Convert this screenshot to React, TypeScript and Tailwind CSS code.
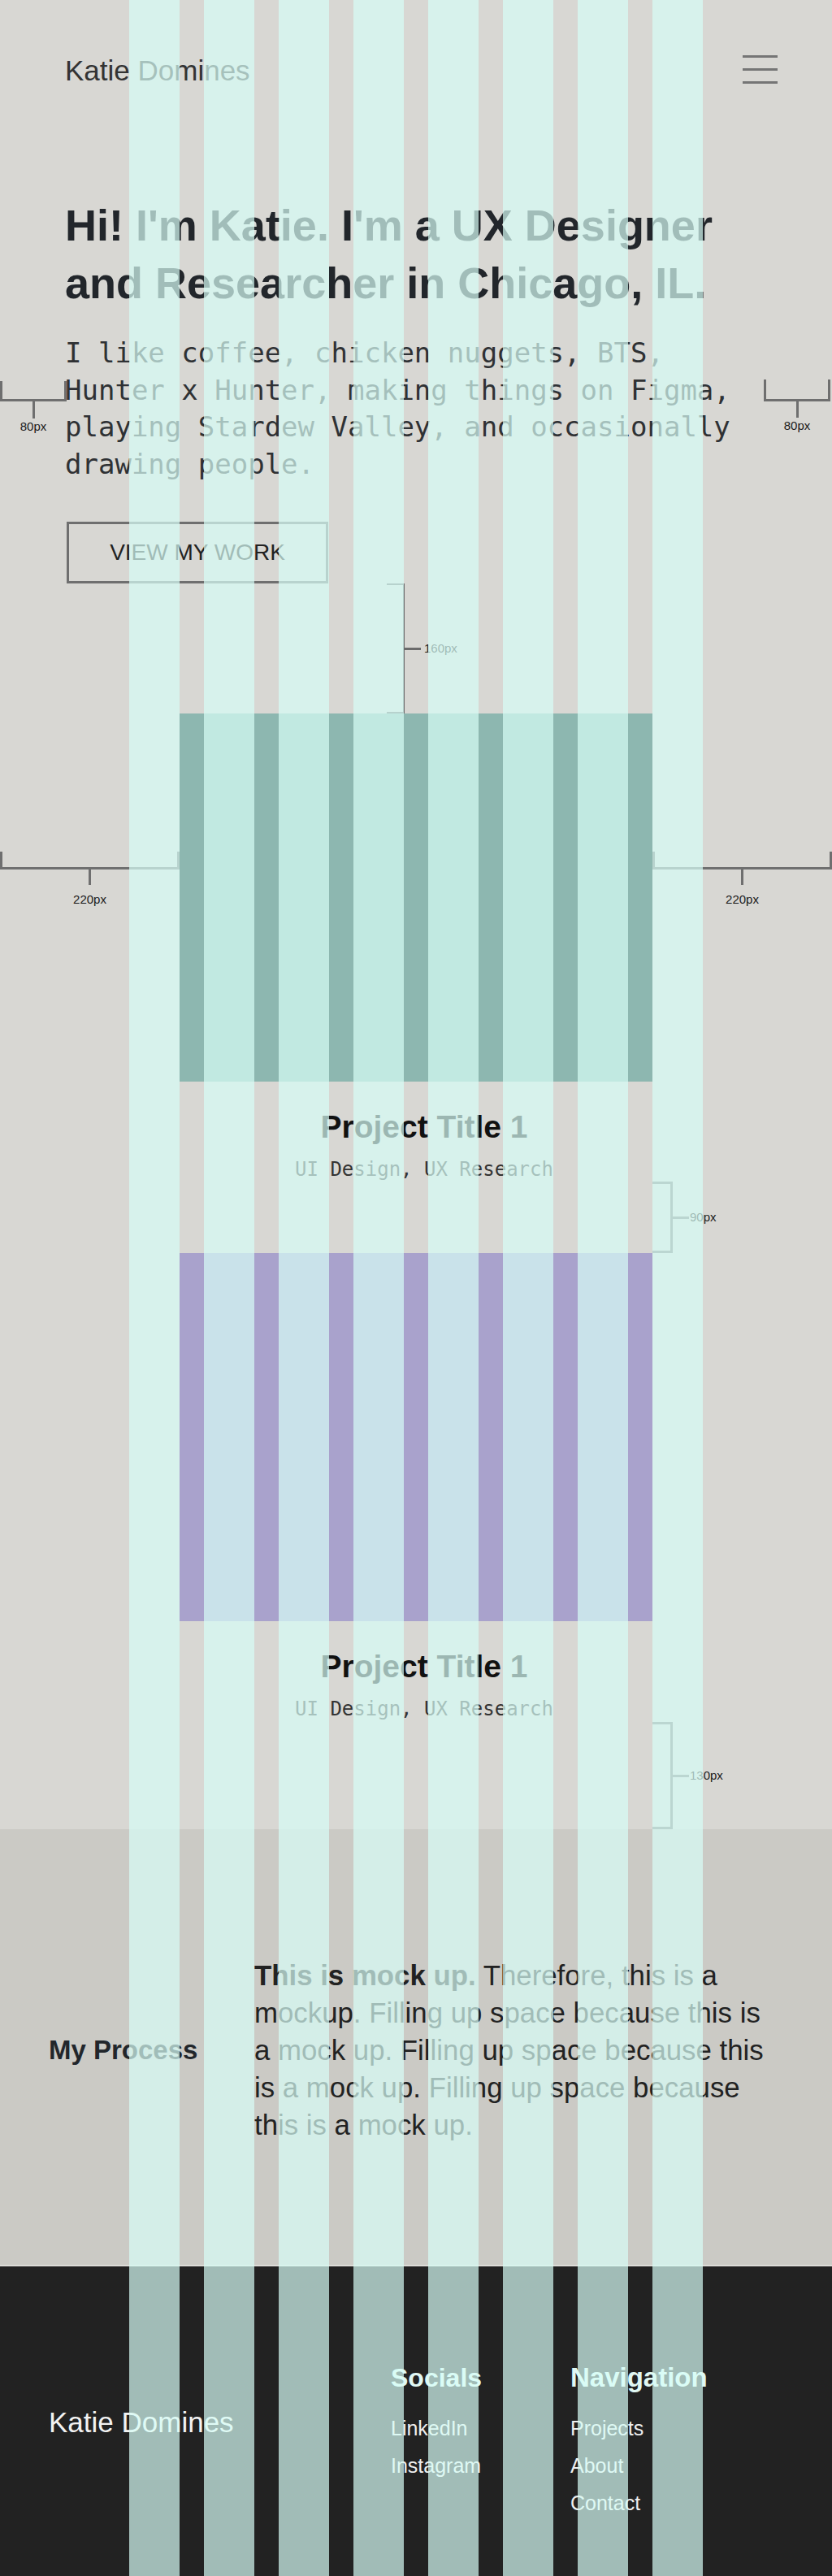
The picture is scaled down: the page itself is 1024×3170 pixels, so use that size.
import React from 'react';

const sans = "font-['Liberation_Sans',Arial,sans-serif]";
const mono = "font-['DejaVu_Sans_Mono','Liberation_Mono',monospace]";
const label = `${sans} text-[15px] leading-[20px] text-[#1a1a1a] whitespace-nowrap`;

const ProjectCard: React.FC<{ color: string; title: string; tags: string }> = ({ color, title, tags }) => {
  return (
    <div className="flex flex-col items-center">
      <div className={`w-[582px] h-[453px] ${color}`}></div>
      <div className="flex flex-col items-center gap-[13px] pt-[32px] pl-[20px]">
        <h2 className={`${sans} text-[39px] leading-[47px] font-bold text-[#111111]`}>{title}</h2>
        <p className={`${mono} text-[24px] leading-[32px] text-[#333333]`}>{tags}</p>
      </div>
    </div>
  );
};

// redline marks from the design file, they sit on top of the page
const Annotations: React.FC = () => {
  return (
    <div className="pointer-events-none absolute inset-0 z-[5]">
      <div className="absolute left-0 top-[469px] flex flex-col items-center">
        <div className="w-[82px] h-[25px] border-x-[3px] border-b-[3px] border-[#6f6f6f]"></div>
        <div className="w-[3px] h-[21px] bg-[#6f6f6f]"></div>
        <span className={label}>80px</span>
      </div>

      <div className="absolute left-[940px] top-[467px] flex flex-col items-center">
        <div className="w-[82px] h-[27px] border-x-[3px] border-b-[3px] border-[#6f6f6f]"></div>
        <div className="w-[3px] h-[20px] bg-[#6f6f6f]"></div>
        <span className={label}>80px</span>
      </div>

      <div className="absolute left-[476px] top-[718px] flex items-center">
        <div className="w-[22px] h-[160px] border-y-2 border-r-2 border-[#6b6b6b]"></div>
        <div className="w-[20px] h-[3px] bg-[#6b6b6b]"></div>
        <span className={`${label} ml-[4px]`}>160px</span>
      </div>

      <div className="absolute left-0 top-[1048px] flex flex-col items-center">
        <div className="w-[221px] h-[22px] border-x-[3px] border-b-[3px] border-[#6f6f6f]"></div>
        <div className="w-[3px] h-[19px] bg-[#6f6f6f]"></div>
        <span className={`${label} mt-[8px]`}>220px</span>
      </div>

      <div className="absolute left-[803px] top-[1048px] flex flex-col items-center">
        <div className="w-[221px] h-[22px] border-x-[3px] border-b-[3px] border-[#6f6f6f]"></div>
        <div className="w-[3px] h-[19px] bg-[#6f6f6f]"></div>
        <span className={`${label} mt-[8px]`}>220px</span>
      </div>

      <div className="absolute left-[803px] top-[1454px] flex items-center">
        <div className="w-[25px] h-[88px] border-y-[3px] border-r-[3px] border-[#7a7a7a]"></div>
        <div className="w-[20px] h-[3px] bg-[#7a7a7a]"></div>
        <span className={`${label} ml-px`}>90px</span>
      </div>

      <div className="absolute left-[803px] top-[2119px] flex items-center">
        <div className="w-[25px] h-[132px] border-y-[3px] border-r-[3px] border-[#7a7a7a]"></div>
        <div className="w-[20px] h-[3px] bg-[#7a7a7a]"></div>
        <span className={`${label} ml-px`}>130px</span>
      </div>
    </div>
  );
};

const GridOverlay: React.FC = () => {
  const cols = [0, 1, 2, 3, 4, 5, 6, 7];
  return (
    <div className="pointer-events-none absolute inset-0 z-10 flex justify-between px-[159px]">
      {cols.map((c) => (
        <div key={c} className="w-[62px] h-full bg-[#d7fdf7]/70"></div>
      ))}
    </div>
  );
};

export default function App() {
  return (
    <div className="relative w-[1024px] h-[3170px] overflow-hidden bg-[#d8d7d3]">
      {/* hero + projects */}
      <section className="h-[2251px]">
        <header className="flex items-start justify-between pt-[67px] pl-20 pr-[67px]">
          <span className={`${sans} text-[35px] leading-[40px] text-[#333333]`}>Katie Domines</span>
          <button className="mt-[1px] flex flex-col gap-[13px]" aria-label="menu">
            <span className="block w-[43px] h-[3px] bg-[#757575]"></span>
            <span className="block w-[43px] h-[3px] bg-[#757575]"></span>
            <span className="block w-[43px] h-[3px] bg-[#757575]"></span>
          </button>
        </header>

        <div className="flex flex-col items-start px-20 pt-[135px]">
          <h1 className={`${sans} text-[54px] leading-[71px] font-bold text-[#22262b]`}>
            Hi! I'm Katie. I'm a UX Designer and Researcher in Chicago, IL.
          </h1>
          <p className={`${mono} mt-[28px] text-[34px] leading-[45.7px] text-[#2f3134]`}>
            I like coffee, chicken nuggets, BTS, Hunter x Hunter, making things on Figma, playing Stardew Valley, and occasionally drawing people.
          </p>
          <a
            href="#work"
            className={`${sans} ml-[2px] mt-[47px] flex h-[76px] w-[322px] items-center justify-center border-[3px] border-[#6f6f6f] text-[28px] text-[#222222]`}
          >
            VIEW MY WORK
          </a>
        </div>

        <div id="work" className="mt-[160px] flex flex-col gap-[87px]">
          <ProjectCard color="bg-[#8db7b0]" title="Project Title 1" tags="UI Design, UX Research" />
          <ProjectCard color="bg-[#a9a2cc]" title="Project Title 1" tags="UI Design, UX Research" />
        </div>
      </section>

      {/* process */}
      <section className="h-[536px] bg-[#cbcac5] pt-[157px] pl-[60px]">
        <div className="flex items-center">
          <h3 className={`${sans} w-[253px] text-[33px] leading-[40px] font-bold text-[#22262b]`}>My Process</h3>
          <p className={`${sans} w-[636px] text-[34.8px] leading-[46px] font-light text-[#222222]`}>
            <strong className="font-bold">This is mock up.</strong> Therefore, this is a mockup. Filling up space because this is a mock up. Filling up space because this is a mock up. Filling up space because this is a mock up.
          </p>
        </div>
      </section>

      {/* footer */}
      <footer className="h-[383px] border-t-2 border-[#dddcd8] bg-[#222222] pt-[117px] pl-[60px]">
        <div className="flex items-start">
          <div className={`${sans} mt-[55px] w-[421px] text-[35px] leading-[40px] font-light text-[#f2f2f2]`}>Katie Domines</div>
          <div className="w-[221px]">
            <h4 className={`${sans} text-[32px] leading-[40px] font-bold text-[#e0f7f3]`}>Socials</h4>
            <ul className={`${sans} mt-[19px] text-[25px] leading-[46px] font-light text-[#eeeeee]`}>
              <li>LinkedIn</li>
              <li>Instagram</li>
            </ul>
          </div>
          <div>
            <h4 className={`${sans} text-[33px] leading-[40px] font-bold text-[#e0f7f3]`}>Navigation</h4>
            <ul className={`${sans} mt-[19px] text-[25px] leading-[46px] font-light text-[#eeeeee]`}>
              <li>Projects</li>
              <li>About</li>
              <li>Contact</li>
            </ul>
          </div>
        </div>
      </footer>

      <Annotations />
      <GridOverlay />
    </div>
  );
}
